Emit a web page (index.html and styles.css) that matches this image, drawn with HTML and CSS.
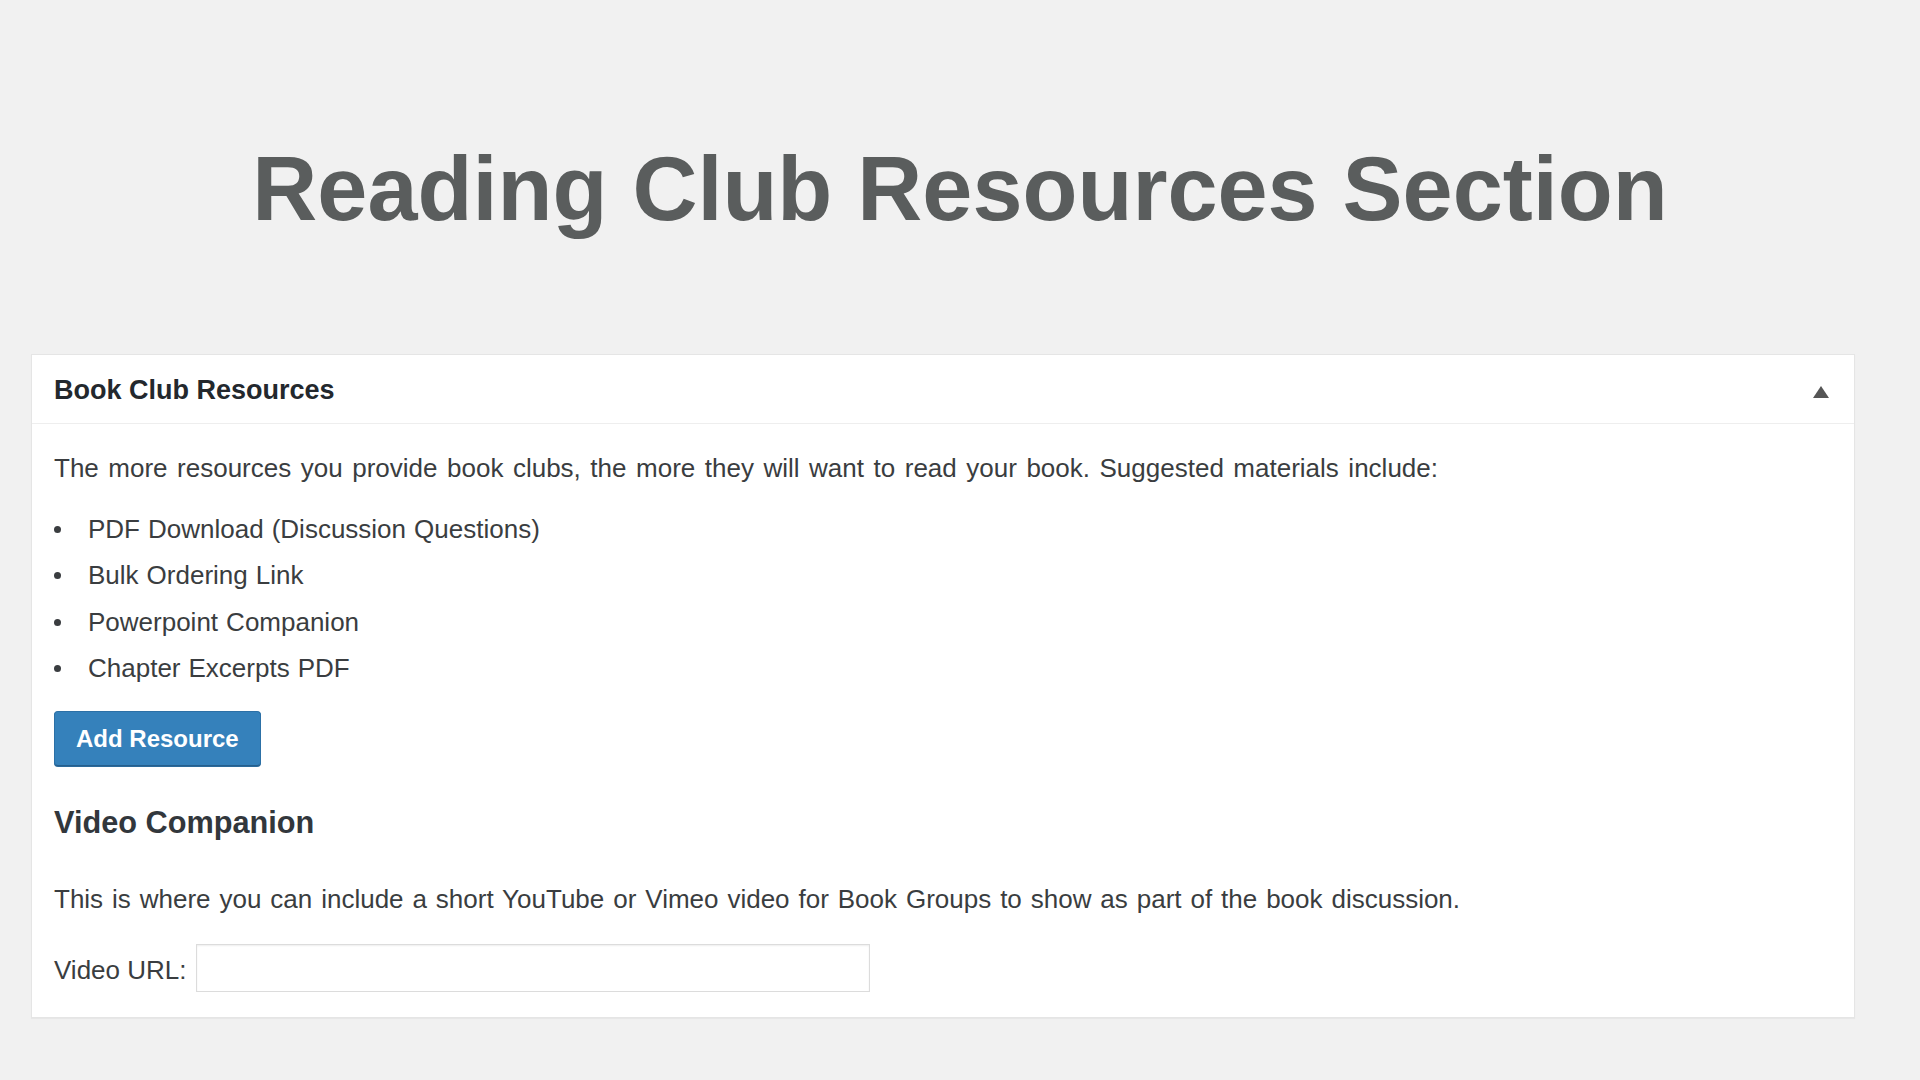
FILE: index.html
```html
<!DOCTYPE html>
<html lang="en">
<head>
<meta charset="utf-8">
<title>Reading Club Resources Section</title>
<link rel="stylesheet" href="styles.css">
</head>
<body>
<div class="page">
  <h1 class="page-title">Reading Club Resources Section</h1>
  <section class="card">
    <div class="card-header">
      <h2 class="card-title">Book Club Resources</h2>
      <span class="toggle" aria-hidden="true"></span>
    </div>
    <div class="card-body">
      <p class="intro">The more resources you provide book clubs, the more they will want to read your book. Suggested materials include:</p>
      <ul class="resources">
        <li>PDF Download (Discussion Questions)</li>
        <li>Bulk Ordering Link</li>
        <li>Powerpoint Companion</li>
        <li>Chapter Excerpts PDF</li>
      </ul>
      <button class="btn-primary" type="button">Add Resource</button>
      <h3 class="sub-title">Video Companion</h3>
      <p class="video-desc">This is where you can include a short YouTube or Vimeo video for Book Groups to show as part of the book discussion.</p>
      <div class="field">
        <label class="field-label" for="video-url">Video URL:</label>
        <input class="field-input" id="video-url" type="text">
      </div>
    </div>
  </section>
</div>
</body>
</html>
```

FILE: styles.css
```css
html, body {
  margin: 0;
  padding: 0;
  background: #f1f1f1;
}

body {
  font-family: "Liberation Sans", Arial, Helvetica, sans-serif;
  color: #3a3d40;
}

.page {
  padding-top: 145px;
  padding-bottom: 40px;
}

.page-title {
  margin: 0;
  text-align: center;
  font-size: 90px;
  line-height: 89px;
  font-weight: 700;
  color: #5a5d5d;
}

.card {
  margin: 120px 65px 0 31px;
  background: #fff;
  border: 1px solid #e5e5e5;
  box-shadow: 0 1px 1px rgba(0, 0, 0, 0.04);
}

.card-header {
  box-sizing: border-box;
  height: 69px;
  border-bottom: 1px solid #eeeeee;
  padding: 3px 25px 0 22px;
  display: flex;
  align-items: center;
  justify-content: space-between;
}

.card-title {
  margin: 0;
  font-size: 27px;
  font-weight: 700;
  color: #23282d;
}

.toggle {
  width: 0;
  height: 0;
  margin-top: 3px;
  border-left: 8px solid transparent;
  border-right: 8px solid transparent;
  border-bottom: 12px solid #555;
}

.card-body {
  padding: 26px 22px 25px 22px;
  font-size: 26px;
  line-height: 36px;
  word-spacing: 1.7px;
}

.intro {
  margin: 0;
  word-spacing: 2.3px;
}

.resources {
  list-style: none;
  margin: 19.75px 0 0 0;
  padding: 0;
}

.resources li {
  display: flex;
  align-items: center;
  line-height: 46.5px;
  word-spacing: 0.8px;
}

.resources li::before {
  content: "";
  width: 7px;
  height: 7px;
  border-radius: 50%;
  background: #3a3d40;
  margin-right: 27px;
  flex: none;
}

.btn-primary {
  display: block;
  margin-top: 19.25px;
  height: 55px;
  padding: 0 21px;
  font-family: inherit;
  font-size: 24px;
  font-weight: 700;
  word-spacing: normal;
  color: #fff;
  background: #3581bb;
  border: 1px solid #2c70a6;
  border-bottom-color: #255f8d;
  border-radius: 4px;
  box-shadow: 0 1px 0 #2b6a9b;
}

.sub-title {
  margin: 37px 0 0 0;
  font-size: 30.7px;
  line-height: 40px;
  font-weight: 700;
  word-spacing: normal;
  color: #32373c;
}

.video-desc {
  margin: 38px 0 0 0;
}

.field {
  margin-top: 27px;
  display: flex;
  align-items: center;
  gap: 9px;
}

.field-label {
  line-height: 36px;
  padding-top: 4px;
  word-spacing: normal;
}

.field-input {
  box-sizing: border-box;
  width: 674px;
  height: 48px;
  margin: 0;
  border: 1px solid #dcdcdc;
  box-shadow: inset 0 1px 2px rgba(0, 0, 0, 0.07);
  background: #fff;
  font-family: inherit;
  font-size: 24px;
}
```
